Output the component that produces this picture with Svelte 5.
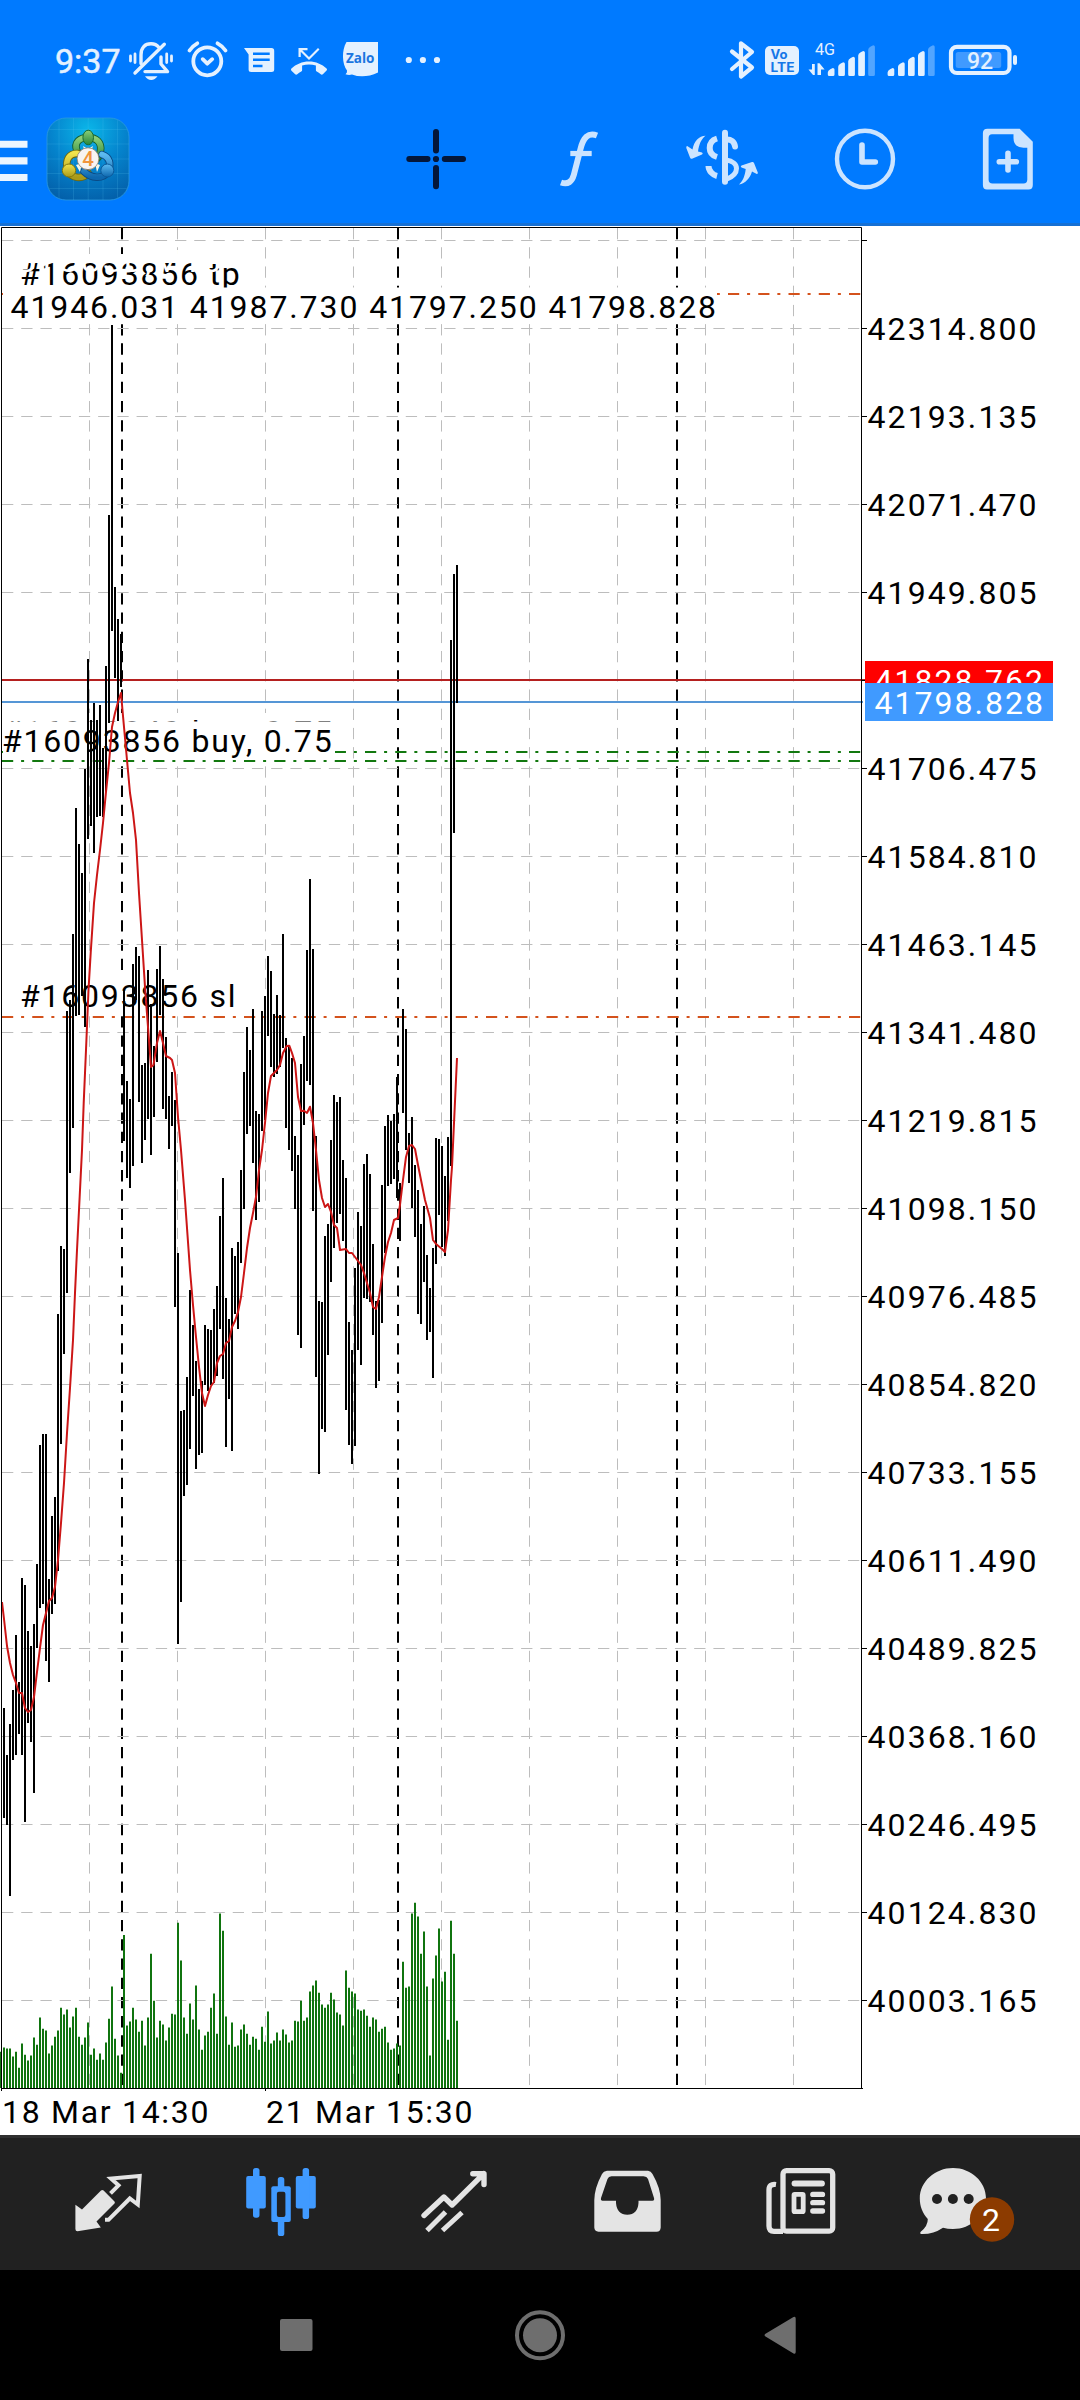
<script>
  // Plot geometry, in pixels of the whole screen
  const rows = Array.from({ length: 21 }, (_, i) => 240.5 + 88 * i);
  const columns = Array.from({ length: 9 }, (_, i) => 89.5 + 88 * i);
  const sessions = [122, 398, 677];

  // Price ladder; the row at index 5 is covered by the ask and bid tags
  const prices = rows
    .map((y, i) => ({ y, i, text: (42314.8 - 121.665 * (i - 1)).toFixed(3) }))
    .filter((p) => p.i !== 0 && p.i !== 5);

  // Top and bottom of each bar, one bar every 3 px
  const bars = [
    [1708,1818],[1755,1825],[1724,1896],[1690,1760],[1635,1755],[1682,1734],[1578,1755],[1585,1822],[1631,1723],[1646,1742],
    [1624,1793],[1564,1648],[1445,1608],[1434,1604],[1434,1661],[1579,1682],[1516,1614],[1497,1604],[1314,1571],[1246,1444],
    [1249,1354],[1011,1293],[1000,1173],[934,1128],[808,1016],[844,1015],[873,996],[769,1027],[659,839],[720,826],
    [703,853],[720,817],[705,816],[748,817],[666,792],[515,723],[325,631],[587,678],[619,721],[634,687],
    [990,1141],[1081,1178],[1099,1188],[964,1166],[947,1000],[956,1102],[1065,1163],[1063,1140],[970,1119],[1004,1155],
    [1046,1117],[969,1062],[946,1015],[979,1109],[1037,1119],[1096,1149],[1072,1126],[1100,1307],[1253,1644],[1411,1602],
    [1410,1496],[1377,1485],[1290,1449],[1325,1396],[1361,1469],[1389,1455],[1381,1453],[1325,1385],[1329,1391],[1330,1385],
    [1309,1383],[1286,1376],[1216,1329],[1178,1379],[1298,1447],[1319,1399],[1248,1451],[1256,1314],[1242,1329],[1170,1263],
    [1072,1209],[1027,1134],[1050,1126],[1009,1163],[1111,1220],[1114,1202],[1011,1131],[996,1120],[956,1036],[971,1067],
    [1014,1077],[995,1074],[1015,1067],[934,1048],[1038,1128],[1045,1150],[1058,1171],[1136,1209],[1155,1335],[1064,1348],
    [1036,1125],[950,1081],[879,1085],[949,1211],[1136,1377],[1301,1474],[1302,1429],[1236,1432],[1224,1355],[1140,1282],
    [1095,1248],[1102,1223],[1097,1214],[1160,1241],[1178,1410],[1322,1445],[1350,1464],[1268,1446],[1212,1350],[1226,1365],
    [1164,1298],[1154,1299],[1174,1302],[1244,1335],[1301,1388],[1300,1381],[1185,1323],[1126,1253],[1115,1186],[1121,1184],
    [1114,1179],[1077,1198],[1183,1241],[1009,1113],[1029,1150],[1133,1183],[1117,1208],[1165,1237],[1190,1314],[1224,1324],
    [1206,1282],[1255,1340],[1288,1332],[1248,1378],[1138,1264],[1139,1215],[1146,1247],[1176,1256],[1137,1221],[640,1166],
    [574,833],[565,703]
  ];

  // Tick volume, measured down from a common ceiling
  const volumeFloor = 1407;
  const volumeScale = 0.3827;
  const volume = [
    1312,1301,1304,1304,1325,1312,1354,1291,1320,1335,1322,1275,1294,1223,1252,1257,1317,1296,1273,1257,
    1197,1215,1202,1249,1220,1197,1273,1294,1275,1236,1320,1304,1333,1317,1333,1288,1226,1142,1278,1322,
    1367,1007,1244,1233,1197,1228,1260,1231,1296,1223,1056,1179,1275,1231,1241,1283,1249,1213,1215,975,
    1074,1223,1265,1186,1228,1139,1254,1307,1270,1260,1197,1160,1265,951,996,1220,1294,1236,1299,1296,
    1254,1241,1265,1294,1273,1278,1307,1247,1286,1207,1291,1283,1262,1283,1254,1267,1288,1283,1231,1233,
    1179,1231,1223,1155,1139,1126,1158,1189,1197,1189,1158,1176,1210,1215,1244,1100,1145,1155,1160,1202,
    1205,1202,1218,1247,1223,1228,1260,1252,1247,1288,1307,1304,1291,1296,1077,1145,1142,951,923,959,
    1056,998,1142,1322,1121,1061,990,1129,1103,1281,970,1056,1231
  ];

  const average =
    '2,1602 4,1619 7,1646 10,1663 13,1675 16,1683 19,1693 22,1693 25,1708 28,1712 31,1710 34,1697 37,1672 40,1648 43,1625 46,1613 49,1601 52,1598 55,1587 58,1560 61,1523 64,1483 67,1433 70,1388 73,1340 75,1293 77,1250 79.5,1200 82,1150 83.7,1103 86,1050 88.5,990 90.7,953 94,903 97,875 100,850 103,823 106,792 109,763 112,727 115,713 118,702 121,693 123,716 127,760 130,793 133,813 136,840 139,893 142,940 145,987 148,1027 151,1067 153.5,1065 157,1043 160,1031 163,1043 166,1056 170,1058 172,1060 175,1073 178,1117 181,1150 185,1200 190,1270 193,1305 196,1337 199,1367 202,1393 205,1406 208,1395 211,1386 214,1382 217,1363 220,1356 223,1354 226,1343 229,1341 232,1327 235,1321 238,1312 241,1297 244,1273 247,1248 250,1228 253,1213 256,1197 259,1170 262,1150 265,1123 268,1093 271,1076 277,1070 280,1065 283,1053 286.7,1046 289.3,1045.7 292,1053 295,1063 298,1097 301,1111 304,1110.7 307,1113 310,1106.7 313,1123 316,1150 319,1180 322,1198 325,1207 328,1204 331,1212 334,1225 337,1228 340,1250 346,1249 349,1253 352,1253 355,1257 361,1265 364,1273 367,1283 370,1293 373,1307 376,1309 379,1297 382,1277 385,1257 388,1242 391,1233 394,1220 398,1218 400,1205 403,1180 406,1157 409,1146 412,1145 415,1149 418,1165 421,1180 425,1200 430,1218 433,1240 436,1244 442,1249 445,1252 448,1230 451,1180 452,1167 454,1123 457,1058';

  // Signal strength bars: offset from the left and top edge
  const signal = [[0, 68], [10.4, 62.3], [20.4, 56.7], [30.4, 51], [40.4, 45.3]];
</script>

{#snippet signalBars(x)}
  {#each signal as [dx, top], i}
    <path
      class:dim={i === 4}
      class="lit"
      d="M{x + dx} {top + 4.5}Q{x + dx} {top + 2.5} {x + dx + 2.5} {top + 1.3}L{x + dx + 5} {top}Q{x + dx + 6.7} {top} {x + dx + 6.7} {top + 1.5}V74.5Q{x + dx + 6.7} 76 {x + dx + 5.2} 76H{x + dx + 1.5}Q{x + dx} 76 {x + dx} 74.5Z"
    />
  {/each}
{/snippet}

<div class="screen">
  <header>
    <div class="status">
      <time>9:37</time>
      <svg class="icon" width="57" height="50" viewBox="125 36 57 50">
        <g class="stroke" stroke-width="3.4">
          <path d="M130.5 56V61M135 54V62.500M166.700 54V62.500M171.500 56V61" stroke-width="2.800" />
          <path d="M141 63.500V55C141 47.500 145 43.800 151 43.800C154.500 43.800 157 45 159 47.500" />
          <path d="M164.300 44.200L135 73" />
          <path d="M161 57V64L167.500 71.600H145" />
        </g>
        <path class="lit" d="M145 76.300H157.500Q155 79.900 151.200 79.900T145 76.300Z" />
      </svg>
      <svg class="icon" width="55" height="50" viewBox="182 36 55 50">
        <g class="stroke" stroke-width="3.800">
          <circle cx="207.300" cy="61.300" r="14" />
          <path d="M189.500 50.500Q192.500 46 197.300 43.300M217.500 43.300Q222.500 46 225.500 50.500" />
          <path d="M202.700 59.200L207.300 63.700L212.200 59.200" />
        </g>
      </svg>
      <svg class="icon" width="46" height="50" viewBox="237 36 46 50">
        <path class="lit" d="M244 48H271.500Q274.200 48 274.200 50.700V69.500Q274.200 72 271.500 72H251.200Q248.600 72 248.600 69.500V54.500Z" />
        <path class="cut" d="M253 53.800H269.700M253 59.700H269.700M253 66H262.500" />
      </svg>
      <svg class="icon" width="52" height="50" viewBox="283 36 52 50">
        <path
          class="lit"
          transform="translate(291 43.5) scale(1.5)"
          d="M6.5 5.500L12 11l7-7-1-1-6 6-4.500-4.500H11V3H5v6h1.500V5.500zm17.210 11.170C20.660 13.780 16.540 12 12 12 7.460 12 3.340 13.780.29 16.670c-.18.18-.29.43-.29.71 0 .28.11.53.29.71l2.480 2.480c.18.18.43.29.71.29.27 0 .52-.11.7-.28.79-.74 1.690-1.360 2.660-1.850.33-.16.56-.5.56-.9v-3.100c1.450-.48 3-.73 4.600-.73 1.600 0 3.150.25 4.600.72v3.100c0 .39.23.74.56.9.98.49 1.870 1.120 2.670 1.850.18.18.43.28.7.28.28 0 .53-.11.71-.29l2.480-2.480c.18-.18.29-.43.29-.71 0-.28-.12-.52-.3-.7z"
        />
      </svg>
      <svg class="icon" width="55" height="50" viewBox="335 36 55 50">
        <path class="lit" d="M346.500 42H378V72.500Q364 79 352 74.500Q349 75.500 345.500 74.300Q347.500 72.500 347 70.500C342 64 341.500 50 346.500 42Z" />
        <text class="zalo" x="346" y="63.200" textLength="28.500" lengthAdjust="spacingAndGlyphs">Zalo</text>
      </svg>
      <svg class="icon" width="60" height="50" viewBox="390 36 60 50">
        <g class="lit"><circle cx="408.800" cy="60" r="3.100" /><circle cx="422.900" cy="60" r="3.100" /><circle cx="437" cy="60" r="3.100" /></g>
      </svg>
      <svg class="icon push" width="38" height="50" viewBox="722 36 38 50">
        <path class="stroke" stroke-width="4.200" d="M732 51.500L752 67.500L741 76.500V43.300L752 52L732 69" />
      </svg>
      <svg class="icon" width="44" height="50" viewBox="760 36 44 50">
        <rect class="lit" x="765" y="46" width="34" height="29" rx="5" />
        <text class="volte" x="770.500" y="58.800" textLength="17" lengthAdjust="spacingAndGlyphs">Vo</text>
        <text class="volte" x="770.500" y="71.500" textLength="24" lengthAdjust="spacingAndGlyphs">LTE</text>
      </svg>
      <svg class="icon" width="76" height="50" viewBox="804 36 76 50">
        <text class="network" x="815" y="55" textLength="20" lengthAdjust="spacingAndGlyphs">4G</text>
        <path class="lit" d="M812 64H814.800V75H813L808.500 69.500H812ZM817.500 75V63.300H819.500L824.600 69.500H821V75Z" />
        {@render signalBars(827.8)}
      </svg>
      <svg class="icon" width="60" height="50" viewBox="880 36 60 50">{@render signalBars(887.6)}</svg>
      <svg class="icon" width="90" height="50" viewBox="940 36 90 50">
        <rect class="stroke" x="951" y="46.800" width="58.500" height="26.200" rx="6" stroke-width="4.200" />
        <rect class="charge" x="955.700" y="52" width="45.500" height="16" rx="2.500" />
        <rect class="lit" x="1013" y="55" width="4" height="10" rx="2" />
        <text class="percent" x="980" y="69.200" text-anchor="middle">92</text>
      </svg>
    </div>

    <div class="toolbar">
      <svg class="icon" width="36" height="90" viewBox="0 114 36 90">
        <path class="menu" d="M0 140.700H27.500V147.800H0ZM0 157.200H27.500V164.500H0ZM0 174H27.500V181H0Z" />
      </svg>
      <svg class="icon" width="104" height="90" viewBox="36 114 104 90">
        <defs>
          <radialGradient id="tile" cx=".5" cy=".15" r=".9">
            <stop offset="0" stop-color="#0ab6e9" /><stop offset=".5" stop-color="#0584cd" /><stop offset="1" stop-color="#035fa9" />
          </radialGradient>
          <linearGradient id="green" x2="0" y2="1"><stop stop-color="#8ccf78" /><stop offset="1" stop-color="#26853a" /></linearGradient>
          <linearGradient id="gold" x2="0" y2="1"><stop stop-color="#f1e34c" /><stop offset="1" stop-color="#a99a18" /></linearGradient>
          <linearGradient id="sky" x2="0" y2="1"><stop stop-color="#5cbaf0" /><stop offset="1" stop-color="#0d67ae" /></linearGradient>
        </defs>
        <rect x="47" y="118" width="82" height="82" rx="19" fill="url(#tile)" stroke="#2c9bdd" stroke-width=".8" />
        <path class="mesh" d="M59 120V198M73.500 118V200M88.200 118V200M103 118V200M117.500 120V198M49 129.500H127M47 144H129M47 159H129M47 173.500H129M49 188.500H127" />
        <g fill="none" stroke-linecap="round">
          <path d="M77 151C73.500 142 80 137.500 88 137.500S102 142 100.500 151C100 156 97 160 94 160" stroke="#155e31" stroke-width="7.500" />
          <path d="M77 151C73.500 142 80 137.500 88 137.500S102 142 100.500 151C100 156 97 160 94 160" stroke="url(#green)" stroke-width="5.700" />
          <path d="M78 153.500C69 153 65 160 67.500 170C71 179 83 179.500 88 173" stroke="#6d650b" stroke-width="7.500" />
          <path d="M78 153.500C69 153 65 160 67.500 170C71 179 83 179.500 88 173" stroke="url(#gold)" stroke-width="5.700" />
          <path d="M102 154.500C109.500 157 112 164 107.500 172C103 179.500 91 178.500 84 171.500" stroke="#0a4a85" stroke-width="7.500" />
          <path d="M102 154.500C109.500 157 112 164 107.500 172C103 179.500 91 178.500 84 171.500" stroke="url(#sky)" stroke-width="5.700" />
        </g>
        <path d="M83 146L88 149L93 146L91 152H85ZM76 165L82 163L80 172ZM100 165L95 163L97 172Z" fill="#f4f6e9" />
        <ellipse cx="88.200" cy="137.500" rx="5.300" ry="7.300" fill="url(#green)" stroke="#176a30" />
        <ellipse cx="69" cy="170.500" rx="6.700" ry="6.500" fill="url(#gold)" stroke="#85790d" />
        <ellipse cx="107.300" cy="170.500" rx="6.500" ry="6.500" fill="url(#sky)" stroke="#0b5a9b" />
        <circle cx="88" cy="158.700" r="10.900" fill="#f7f4f2" stroke="#816f5a" stroke-width=".7" />
        <text class="four" x="88" y="166" text-anchor="middle">4</text>
      </svg>
      <svg class="icon push" width="90" height="90" viewBox="391 114 90 90">
        <path class="cross" d="M409.300 159H427.500M444.800 159H463M436 132V150.500M436 168V186.300" />
        <circle class="dark" cx="436" cy="159" r="3.100" />
      </svg>
      <svg class="icon f" width="90" height="90" viewBox="534 114 90 90">
        <g class="tool">
          <path d="M561 182.500C568 185 572 181.500 573.800 175L580.500 149C583.200 138 588 132 597 135.500" stroke-width="6" />
          <path d="M570.300 153.500H591.700" stroke-width="5.200" />
        </g>
      </svg>
      <svg class="icon exchange" width="90" height="90" viewBox="677 114 90 90">
        <g class="tool" stroke-width="6">
          <path d="M725 132.800V181.700" stroke-linecap="round" />
          <path d="M717 138.500C712 140 709.700 144 709.700 148S712 155.500 717 157M708.500 166C708.500 171 713 175 717 176" />
          <path d="M726 139.500C731 139 734.500 142 735 146.500" stroke-linecap="round" />
          <path d="M726 160C740 162 740 174 726 179.500" stroke-width="5" />
        </g>
        <path class="toolfill" d="M705.600 135.800C699 136 694 141 692.500 149.500L687.200 146Q686 146 686.300 148L690 157.500Q690.500 159 692 158.700L702 154.500Q703.500 153.500 702 152.500L698 151.500C699 145 701 139 705.600 135.800ZM739 184.500C745.500 183.500 750 178 752 171.500L756.800 174Q758 174 757.800 172.500L754 163Q753.300 161.500 752 162L741.500 165.500Q740 166.500 741.500 167.500L745.700 169C745 175.500 743 181 739 184.500Z" />
      </svg>
      <svg class="icon clock" width="90" height="90" viewBox="820 114 90 90">
        <g class="tool"><ellipse cx="865" cy="159" rx="28" ry="28.300" stroke-width="4.400" /><path d="M862 145V162H875.300" stroke-width="5.600" stroke-linecap="round" stroke-linejoin="round" /></g>
      </svg>
      <svg class="icon doc" width="90" height="90" viewBox="963 114 90 90">
        <path class="toolfill" fill-rule="evenodd" d="M987.500 128.700H1019.700L1032.800 141.700V185Q1032.800 189.500 1028.500 189.500H987Q982.900 189.500 982.900 185V133Q982.900 128.700 987.500 128.700ZM992 134.200Q988.600 134.500 988.600 138V179.500Q988.600 183.500 992.500 183.500H1023.500Q1027.300 183.500 1027.300 179.500V147.700H1023.500Q1013.500 147.500 1013.500 138V134.200Z" />
        <path class="tool" d="M999.300 161.700H1016.300M1008 153.300V170" stroke-width="5.600" stroke-linecap="round" />
      </svg>
    </div>
  </header>

  <svg class="chart" width="1080" height="1909" viewBox="0 226 1080 1909">
    <g class="session">{#each sessions as x}<path d="M{x} 228V2087" />{/each}</g>
    <g class="grid">
      {#each rows as y}<path d="M2 {y}H861" />{/each}
      {#each columns as x}<path d="M{x} 228V2087" />{/each}
    </g>

    <path class="level stop" d="M2 294H861" />
    <path class="level order" d="M2 752H861" />
    <path class="level stop" d="M2 1017H861" />

    <g class="box">
      <rect x="3" y="254" width="238" height="35" />
      <rect x="3" y="713" width="332" height="45" />
      <rect x="3" y="975" width="236" height="38" />
      <text x="2.500" y="742.500">#16093840 buy, 0.75</text>
      <rect x="3" y="721.500" width="332" height="37.500" />
      <text x="20" y="284.500">#16093856 tp</text>
      <text class="blank" x="16" y="272">BTCUSD,M15</text>
      <text x="2" y="751.500">#16093856 buy, 0.75</text>
      <text x="20" y="1007">#16093856 sl</text>
    </g>
    <path class="level order" d="M2 761H861" />
    <path class="ask" d="M2 680H865" />
    <path class="bid" d="M2 702H863" />

    <g class="bars">
      {#each bars as [high, low], i}<path d="M{4 + 3 * i} {high}V{low}" />{/each}
    </g>
    <g class="volume">
      {#each volume as v, i}<path d="M{1 + 3 * i} 2088V{2088 - (volumeFloor - v) * volumeScale}" />{/each}
    </g>
    <polyline class="average" points={average} />

    <rect class="paper" x="3" y="287.500" width="714" height="36.500" />
    <text x="10.500" y="318" textLength="705.500">41946.031 41987.730 41797.250 41798.828</text>

    <path class="frame" d="M1.500 2091V227.500H861.500V2088.500M1 2088.500H863M265.500 2088V2091" />
    {#each rows as y}<path class="frame" d="M862 {y}H867" />{/each}
    {#each prices as p}<text x="867.500" y={p.y + 11} textLength="169">{p.text}</text>{/each}

    <rect class="asktag" x="865" y="661" width="188" height="40" />
    <text class="tag" x="874.500" y="691.500" textLength="168.500">41828.762</text>
    <rect class="bidtag" x="865" y="683" width="188" height="38" />
    <text class="tag" x="874.500" y="714" textLength="168.500">41798.828</text>

    <text x="2" y="2122.500" textLength="206.500">18 Mar 14:30</text>
    <text x="266" y="2122.500" textLength="206.500">21 Mar 15:30</text>
  </svg>

  <nav class="tabs">
    <svg width="173" height="132" viewBox="22 8 173 132">
      <path class="pale" d="M75.400 74.700L82 79.500L101 60.500Q102.300 59.500 103.600 60.500L114.500 71.500Q115.300 72.500 114.500 73.500L96.500 91.500L100.800 97.500L77.500 101.300Q75.400 101.300 75.400 99Z" />
      <path class="paleline" stroke-width="4" d="M110.500 63.300L118.500 55.300L111 48.500L139.700 46L137.800 74.500L129.800 68.500L108.500 89.800H105" />
    </svg>
    <svg width="173" height="132" viewBox="195 8 173 132">
      <g class="active">
        <rect x="246.200" y="46" width="19.600" height="32.500" rx="2" /><rect x="253" y="38" width="6.500" height="49.700" rx="2.600" />
        <rect x="295.800" y="46" width="20" height="32.500" rx="2" /><rect x="302.600" y="38" width="6.500" height="51" rx="2.600" />
        <rect x="277.800" y="47" width="6.500" height="59" rx="2.600" /><rect x="271.300" y="56.300" width="19.500" height="35.700" rx="2" />
      </g>
      <rect class="hole" x="276.900" y="61.700" width="8.500" height="25.300" rx="2" />
    </svg>
    <svg width="173" height="132" viewBox="368 8 173 132">
      <path class="paleline" stroke-width="5.400" stroke-linecap="round" stroke-linejoin="round" d="M424 85.500L443.900 67L452.100 75L483.800 43.700M472.800 43.700H484V54.500" />
      <path class="paleline" stroke-width="5" d="M427 100.500L445.500 82M442.500 100.500L462 82.500" />
    </svg>
    <svg width="173" height="132" viewBox="541 8 173 132">
      <path class="pale" fill-rule="evenodd" d="M607 40.700H648Q651 41 652.500 44Q660.500 58 660.700 70V97.500Q660.500 101.700 656.500 101.700H598.500Q594.500 101.500 594.300 97.500V70Q594.500 58 602 44Q603.500 41 607 40.700ZM611.500 46.300Q608.500 46.500 607.500 49L601 68Q600.500 70.700 602.500 70.700H616V73Q617 84.700 627.300 84.700T638.500 73V70.700H652.500Q654.700 70.500 654 68L648 49Q647 46.500 643.500 46.300Z" />
    </svg>
    <svg width="173" height="132" viewBox="714 8 173 132">
      <g class="paleline" stroke-width="5.300">
        <rect x="783" y="40.700" width="49.700" height="60.500" rx="3.500" />
        <path d="M776 54.500Q769 53.500 769 60V96Q769 101.300 774 101.300H783" />
        <path d="M794.500 53.500H822" stroke-linecap="round" stroke-width="5.800" />
        <path d="M812.800 64.400H822.500M812.800 72.700H822.500M812.800 81H822.500" stroke-linecap="round" />
        <rect x="794" y="64.300" width="9.200" height="17.400" rx=".7" stroke-width="4.800" />
      </g>
    </svg>
    <svg width="173" height="132" viewBox="887 8 173 132">
      <path class="pale" d="M953 38C971 38 986 51.500 986 68.500S971 99 953 99Q947.500 99 943 97.700Q933 104.500 921 104Q919.500 103.500 920.500 102Q928 96 927.800 89C922.500 83 919.800 76.500 919.800 68.500C919.800 51.500 935 38 953 38Z" />
      <g class="hole"><circle cx="937" cy="69" r="5" /><circle cx="952.900" cy="69" r="5" /><circle cx="968.700" cy="69" r="5" /></g>
      <circle class="badge" cx="992" cy="89.500" r="22.200" />
      <text class="count" x="991" y="101" text-anchor="middle">2</text>
    </svg>
  </nav>

  <div class="system">
    <svg width="60" height="60" viewBox="0 0 60 60"><rect class="gray" x="14" y="14" width="32.500" height="32" rx="2" /></svg>
    <svg width="60" height="60" viewBox="0 0 60 60"><circle class="ring" cx="30" cy="30.300" r="23" /><circle class="gray" cx="30" cy="30.300" r="17" /></svg>
    <svg width="60" height="60" viewBox="0 0 60 60"><path class="gray" d="M11.500 28.800L39.500 12Q41.700 11 41.700 13.500V47Q41.700 49.500 39.500 48.500L11.500 31.500Q9.500 30.300 11.500 28.800Z" /></svg>
  </div>
</div>

<style>
  :global(body) {
    margin: 0;
    background: #000;
  }
  .screen {
    width: 1080px;
    height: 2400px;
    display: flex;
    flex-direction: column;
    background: #fff;
    font-family: Roboto, 'Liberation Sans', sans-serif;
    overflow: hidden;
  }
  svg {
    display: block;
    flex: none;
  }
  header {
    height: 226px;
    flex: none;
    box-sizing: border-box;
    background: #007aff;
    border-bottom: 3px solid #1670d4;
  }
  .status {
    display: flex;
    padding: 36px 50px 0 55px;
    height: 50px;
  }
  time {
    width: 70px;
    font-size: 34px;
    line-height: 50px;
    color: #e4f1ff;
    font-weight: 400;
    -webkit-text-stroke: 0.5px #e4f1ff;
  }
  .push {
    margin-left: auto;
  }
  .toolbar {
    display: flex;
    height: 90px;
    margin-top: 28px;
    padding-right: 27px;
  }
  .f,
  .exchange,
  .clock,
  .doc {
    margin-left: 53px;
  }
  .lit {
    fill: #e4f1ff;
  }
  .dim {
    opacity: 0.36;
  }
  .stroke {
    fill: none;
    stroke: #e4f1ff;
    stroke-linecap: round;
    stroke-linejoin: round;
  }
  .cut {
    stroke: #007aff;
    stroke-width: 2.4;
  }
  .zalo {
    font: 700 14px 'Open Sans', sans-serif;
    fill: #1a75e0;
  }
  .volte {
    font: 700 12.6px Inter, sans-serif;
    fill: #1577e8;
  }
  .network {
    font-size: 16px;
    fill: #e4f1ff;
  }
  .charge {
    fill: #409aff;
  }
  .percent {
    font-size: 23px;
    font-weight: 500;
    fill: #e4f1ff;
  }
  .menu {
    fill: #edf6ff;
  }
  .mesh {
    stroke: #5cc8f2;
    stroke-opacity: 0.25;
    stroke-width: 0.7;
  }
  .four {
    font: 500 20.5px Roboto, sans-serif;
    fill: #f0953c;
  }
  .cross {
    stroke: #04173a;
    stroke-width: 6;
    stroke-linecap: round;
  }
  .dark {
    fill: #04173a;
  }
  .tool {
    fill: none;
    stroke: #cce4ff;
  }
  .toolfill {
    fill: #cce4ff;
  }

  .chart text {
    font-size: 32px;
    fill: #000;
    letter-spacing: 1.8px;
    white-space: pre;
  }
  .chart text[textLength] {
    letter-spacing: 0;
  }
  .grid path {
    stroke: #bdbdbd;
    stroke-width: 1;
    stroke-dasharray: 11.3 7.927;
  }
  .session path {
    stroke: #000;
    stroke-width: 2;
    stroke-dasharray: 11.3 7.927;
  }
  .level {
    stroke-width: 2;
    stroke-dasharray: 11.2 7.9 3 8.15;
  }
  .stop {
    stroke: #d4521c;
  }
  .order {
    stroke: #12780f;
  }
  .ask {
    stroke: #b5201f;
    stroke-width: 2;
  }
  .bid {
    stroke: #5596d6;
    stroke-width: 2;
  }
  .box rect,
  .paper {
    fill: #fff;
  }
  .chart .blank {
    fill: #fff;
  }
  .bars path {
    stroke: #000;
    stroke-width: 2;
  }
  .volume path {
    stroke: #10740f;
    stroke-width: 2;
  }
  .average {
    fill: none;
    stroke: #cc1616;
    stroke-width: 2;
    stroke-linejoin: round;
  }
  .frame {
    fill: none;
    stroke: #000;
    stroke-width: 1;
  }
  .asktag {
    fill: #f00;
  }
  .bidtag {
    fill: #409aff;
  }
  .chart .tag {
    fill: #fff;
  }

  .tabs {
    display: flex;
    height: 132px;
    flex: none;
    padding-left: 22px;
    background: #212121;
    border-top: 3px solid #303030;
  }
  .pale {
    fill: #e4e4e4;
  }
  .paleline {
    fill: none;
    stroke: #e4e4e4;
  }
  .active {
    fill: #409aff;
  }
  .hole {
    fill: #212121;
  }
  .badge {
    fill: #8c3b00;
  }
  .count {
    font-size: 32px;
    fill: #fff;
  }
  .system {
    flex: 1;
    background: #000;
    display: flex;
    justify-content: center;
    gap: 184px;
    padding-top: 35px;
  }
  .gray {
    fill: #6e6e6e;
  }
  .ring {
    fill: none;
    stroke: #6e6e6e;
    stroke-width: 4;
  }
</style>
